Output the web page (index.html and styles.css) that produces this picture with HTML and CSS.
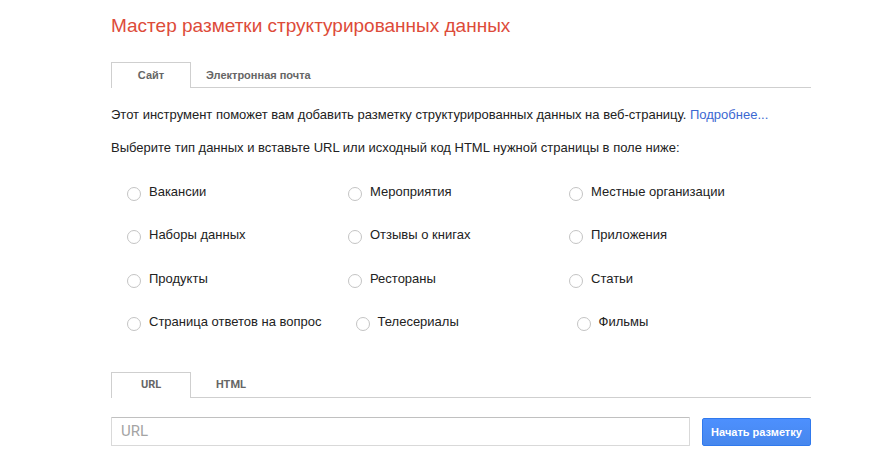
FILE: index.html
```html
<!DOCTYPE html>
<html lang="ru">
<head>
<meta charset="utf-8">
<title>Мастер разметки структурированных данных</title>
<link rel="stylesheet" href="styles.css">
</head>
<body>
<div class="page">
  <h1 class="title">Мастер разметки структурированных данных</h1>

  <div class="tabs">
    <div class="tab active">Сайт</div>
    <div class="tab">Электронная почта</div>
  </div>

  <p class="intro">Этот инструмент поможет вам добавить разметку структурированных данных на веб-страницу. <a class="link" href="#">Подробнее...</a></p>
  <p class="intro second">Выберите тип данных и вставьте URL или исходный код HTML нужной страницы в поле ниже:</p>

  <div class="options">
    <div class="row">
      <label class="opt"><input type="radio" name="t" class="radio"><span>Вакансии</span></label>
      <label class="opt"><input type="radio" name="t" class="radio"><span>Мероприятия</span></label>
      <label class="opt"><input type="radio" name="t" class="radio"><span>Местные организации</span></label>
    </div>
    <div class="row">
      <label class="opt"><input type="radio" name="t" class="radio"><span>Наборы данных</span></label>
      <label class="opt"><input type="radio" name="t" class="radio"><span>Отзывы о книгах</span></label>
      <label class="opt"><input type="radio" name="t" class="radio"><span>Приложения</span></label>
    </div>
    <div class="row">
      <label class="opt"><input type="radio" name="t" class="radio"><span>Продукты</span></label>
      <label class="opt"><input type="radio" name="t" class="radio"><span>Рестораны</span></label>
      <label class="opt"><input type="radio" name="t" class="radio"><span>Статьи</span></label>
    </div>
    <div class="row">
      <label class="opt"><input type="radio" name="t" class="radio"><span>Страница ответов на вопрос</span></label>
      <label class="opt"><input type="radio" name="t" class="radio"><span>Телесериалы</span></label>
      <label class="opt"><input type="radio" name="t" class="radio"><span>Фильмы</span></label>
    </div>
  </div>

  <div class="tabs lower">
    <div class="tab active">URL</div>
    <div class="tab">HTML</div>
  </div>

  <div class="url-row">
    <input class="url-input" type="text" placeholder="URL">
    <button class="btn" type="button">Начать разметку</button>
  </div>
</div>
</body>
</html>
```

FILE: styles.css
```css
html, body {
  margin: 0;
  padding: 0;
  background: #fff;
}

body {
  font-family: "Liberation Sans", Arial, sans-serif;
  color: #222;
}

.page {
  width: 700px;
  margin-left: 111px;
  padding-top: 14px;
}

.title {
  margin: 0;
  font-size: 19px;
  line-height: 24px;
  font-weight: normal;
  color: #dd4b39;
}

.tabs {
  display: flex;
  margin-top: 24px;
  border-bottom: 1px solid #cfcfcf;
}

.tab {
  min-width: 80px;
  box-sizing: border-box;
  padding: 0 14px;
  height: 25px;
  line-height: 24px;
  border: 1px solid transparent;
  border-bottom: 0;
  text-align: center;
  font-size: 11px;
  font-weight: bold;
  color: #666;
}

.tab.active {
  border-color: #cfcfcf;
  background: #fff;
  height: 26px;
  margin-bottom: -1px;
}

.intro {
  margin: 19px 0 0;
  font-size: 13px;
  line-height: 16px;
  color: #222;
}

.intro.second {
  margin-top: 17px;
}

.link {
  color: #3b68d2;
  text-decoration: none;
}

.options {
  margin: 28px 0 0 16px;
  display: flex;
  flex-direction: column;
  gap: 26.33px;
}

.row {
  display: flex;
}

.opt {
  display: flex;
  align-items: flex-start;
  min-width: 221px;
  box-sizing: border-box;
  padding-right: 34px;
  font-size: 13px;
  line-height: 16px;
  color: #222;
}

.radio {
  appearance: none;
  -webkit-appearance: none;
  width: 14px;
  height: 14px;
  margin: 3px 8px 0 0;
  border: 1px solid #c4c4c4;
  border-radius: 50%;
  background: #fff;
  box-sizing: border-box;
  flex: none;
}

.tabs.lower {
  margin-top: 41px;
}

.tabs.lower .tab {
  font-family: Roboto, "Liberation Sans", sans-serif;
  font-weight: bold;
  color: #666;
}

.url-row {
  display: flex;
  align-items: flex-end;
  gap: 12px;
  margin-top: 19px;
}

.url-input {
  width: 579px;
  height: 29px;
  box-sizing: border-box;
  margin: 0;
  padding: 0 9px;
  border: 1px solid #d9d9d9;
  border-top-color: #c0c0c0;
  border-radius: 1px;
  font-family: Roboto, "Liberation Sans", sans-serif;
  font-size: 15px;
  color: #222;
  outline: none;
}

.url-input::placeholder {
  color: #a4a4a4;
}

.btn {
  width: 109px;
  height: 28px;
  box-sizing: border-box;
  margin: 0;
  padding: 0;
  border: 1px solid #3079ed;
  border-radius: 2px;
  background: linear-gradient(#4d90fe, #4787ed);
  color: #fff;
  font-family: "Liberation Sans", Arial, sans-serif;
  font-size: 11px;
  font-weight: bold;
}
```
